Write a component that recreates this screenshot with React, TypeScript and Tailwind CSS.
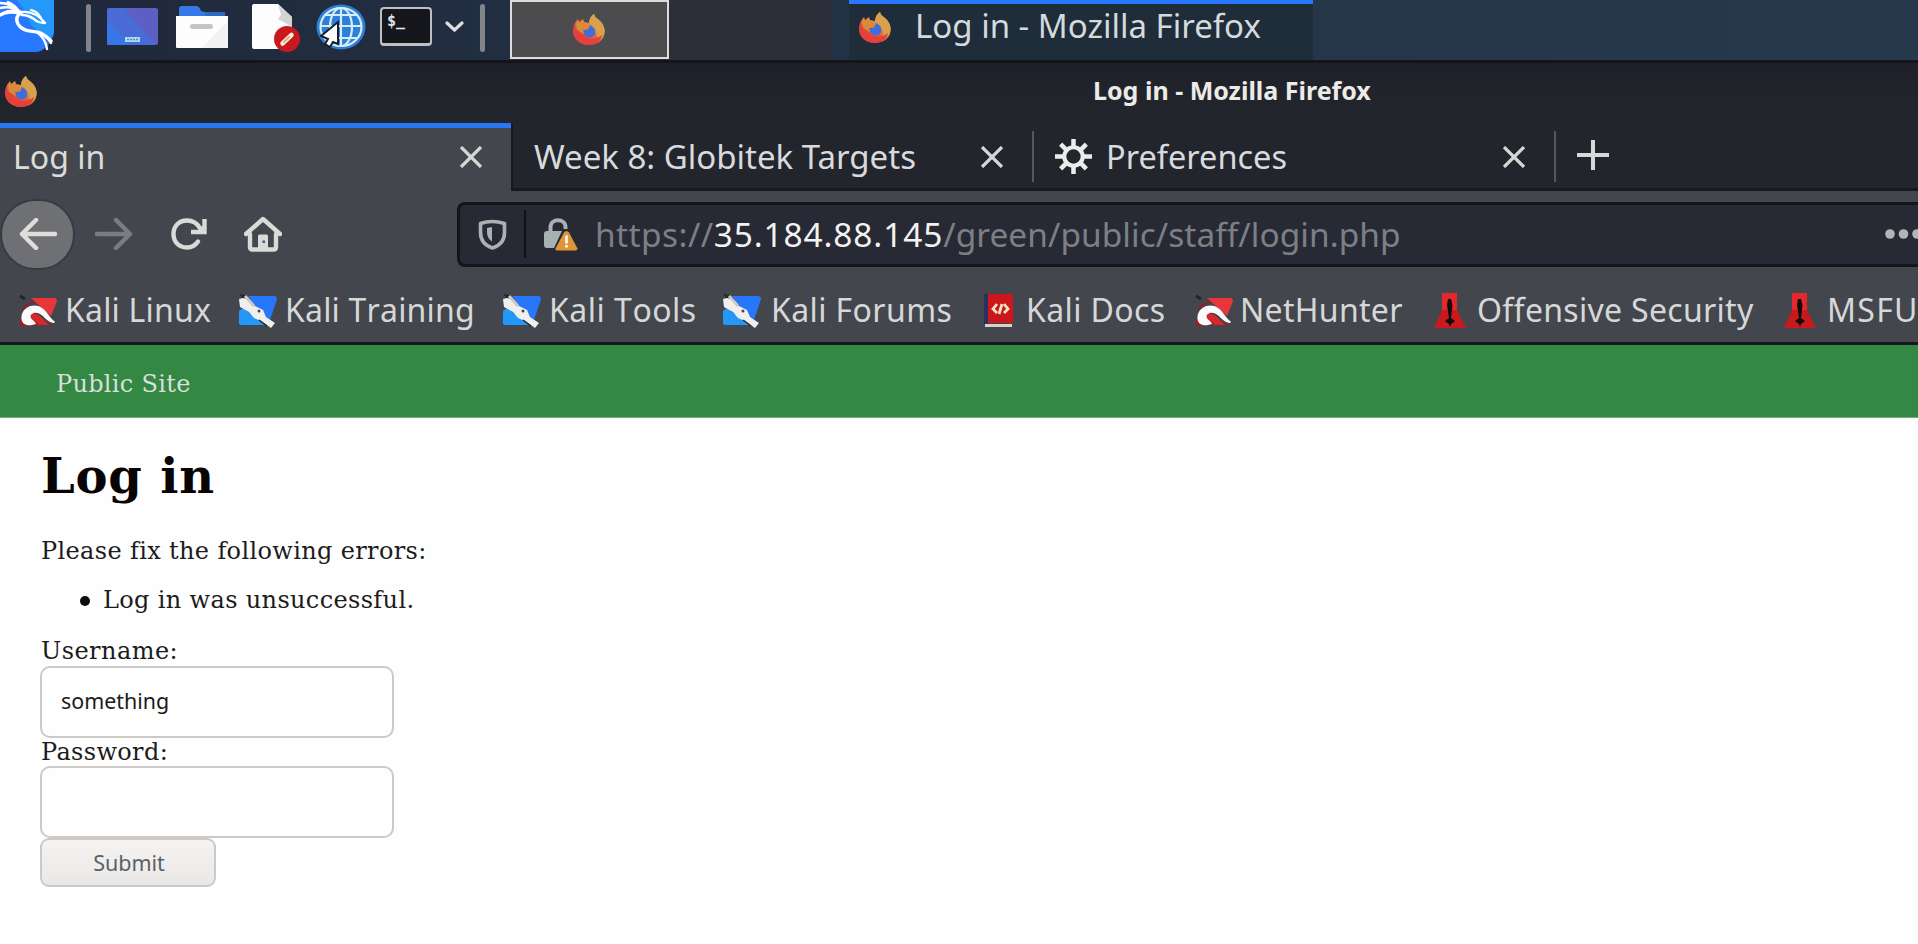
import type { ReactNode } from "react";

function Firefox({ w = 34, h = 31 }: { w?: number; h?: number }) {
  return (
    <svg width={w} height={h} viewBox="0 0 34 31" preserveAspectRatio="none" className="block shrink-0">
      <defs>
        <linearGradient id="foxBody" x1="0.9" y1="0.2" x2="0.3" y2="1">
          <stop offset="0" stopColor="#dca24c" />
          <stop offset="0.4" stopColor="#de8a42" />
          <stop offset="0.65" stopColor="#e4503f" />
          <stop offset="1" stopColor="#e02c39" />
        </linearGradient>
      </defs>
      <path d="M6 5l1 3 4-3 1 3 5 1c1-5 2-7 5-9 1 4 3 5 6 7 5 4 6 12 3 17-3 5-9 7-14 7C7 31 1 24 1 17c0-4 1-8 5-12z" fill="url(#foxBody)" />
      <path d="M22 0c1 4 4 4 7 8 4 5 5 11 1 16l-5 1c1-5 0-9-3-12-2-1-4-2-5-4 0-4 2-7 5-9z" fill="#d9a04d" />
      <path d="M1 15l5 1c2 6 6 9 12 9 6 0 9-2 12-4-1 6-7 10-13 10C8 31 1 25 1 17z" fill="#e2413c" />
      <path d="M6 6l1 3 4-3 1 3 5 2-4 5-1 4-7-4-1-6z" fill="#da8a38" />
      <path d="M11 16l5 0 2-5c4 2 6 5 5 9-2 5-10 4-11-1z" fill="#3b6fdd" />
    </svg>
  );
}

function KaliMenu() {
  return (
    <svg width="54" height="52" viewBox="0 0 54 52" className="block shrink-0">
      <path d="M0 0h54v32c0 7-9 20-18 20H0z" fill="#2777ff" />
      <path d="M17 0h37v31c-1 4-3 7-5 9L31 25l-6-14z" fill="#2599fb" />
      <g fill="none" stroke="#fff" strokeLinecap="round" strokeLinejoin="round">
        <path d="M0 15c7-4 14-3 21-2-5 3-5 7-3 11 4 7 12 7 19 8 6 1 10 5 14 9" strokeWidth="3.400" />
        <path d="M0 8c8-2 15 0 21 4M0 3c8 0 15 4 20 9M8 2c5 2 8 5 11 9M3 13c6-3 11-3 16-1" strokeWidth="2.400" />
        <path d="M22 12c9-1 16 2 23 11-4 0-8-1-11-4-3-2-7-4-12-4" strokeWidth="2.400" />
        <path d="M31 10c5 1 8 4 10 8" strokeWidth="2" />
        <path d="M38 33c5 4 8 9 9 16M42 34c5 3 7 5 9 9" strokeWidth="2.400" />
      </g>
    </svg>
  );
}

function Desktop() {
  return (
    <svg width="52" height="38" viewBox="0 0 52 38" className="block shrink-0">
      <rect width="51" height="37" rx="2.5" fill="#5e5fc5" />
      <path d="M2 0h15l32 37H2a2 2 0 0 1-2-2V2a2 2 0 0 1 2-2z" fill="#4a6ad6" />
      <path d="M0 13l24 24H2a2 2 0 0 1-2-2z" fill="#3676e6" />
      <rect x="18" y="29" width="15" height="5" fill="#a9dcec" />
      <path d="M20 31.5h11" stroke="#5390c5" strokeWidth="1.3" strokeDasharray="2 1" />
    </svg>
  );
}

function Folder() {
  return (
    <svg width="52" height="44" viewBox="0 0 52 44" className="block shrink-0">
      <path d="M26 7h23v8H26z" fill="#286bc4" />
      <path d="M3 12V4q0-3 3-3h14q3 0 4 3 1 3 5 3v6H3z" fill="#3578e8" />
      <path d="M0 11h52v31q0 1-1 1H1q-1 0-1-1z" fill="#fdfdfd" />
      <path d="M52 16v27H26z" fill="#f3f2f1" />
      <rect x="14" y="19" width="23" height="5" rx="2.5" fill="#c6c4c2" />
    </svg>
  );
}

function Editor() {
  return (
    <svg width="48" height="48" viewBox="0 0 48 48" className="block shrink-0">
      <path d="M0 2q0-2 2-2h24l14 13v32H2q-2 0-2-2z" fill="#fdfdfd" />
      <path d="M26 0l14 13v10L26 15l3-4z" fill="#d6d4d2" />
      <circle cx="35" cy="35" r="13" fill="#c9191e" />
      <path d="M30.500 39.500L39.500 31" stroke="#f8eee0" strokeWidth="4.500" strokeLinecap="round" />
      <path d="M32 38l5-5" stroke="#dfae7c" strokeWidth="2" strokeLinecap="round" />
    </svg>
  );
}

function Globe() {
  return (
    <svg width="50" height="46" viewBox="0 0 50 46" className="block shrink-0">
      <ellipse cx="25" cy="23" rx="24.5" ry="22.5" fill="#2d80d8" />
      <g fill="none" stroke="#d6ecf6" strokeWidth="2.2">
        <ellipse cx="25" cy="23" rx="20.5" ry="19" />
        <ellipse cx="25" cy="23" rx="11" ry="19" />
        <path d="M25 3v40M4 22h42M8 11h34M8 34h34" />
      </g>
      <path d="M22 18v22l-5-2-3 5-5-3 3-5-7-3z" fill="#fff" stroke="#17202c" strokeWidth="2" />
    </svg>
  );
}

function Terminal() {
  return (
    <div className="flex h-[39px] w-[52px] shrink-0 items-start rounded-[4px] border-2 border-b-[3px] border-[#c0c0c0] bg-[#15171c] pt-[3px] pl-[5px] font-['DejaVu_Sans_Mono',monospace] text-[15px] leading-[18px] font-bold text-[#e6e6e6]">
      $_
    </div>
  );
}

function Close() {
  return (
    <svg width="24" height="22" viewBox="0 0 24 22" className="block shrink-0">
      <path d="M2 1l20 20M22 1L2 21" stroke="#d6d6d4" strokeWidth="3.200" />
    </svg>
  );
}

function Gear() {
  return (
    <svg width="37" height="35" viewBox="-18 -17 36 34" className="block shrink-0">
      <g stroke="#ececea" strokeWidth="4.4">
        <path d="M0-17V-9M0 17V9M-18 0H-9M18 0H9M-12.5-12L-7-6.500M12.500-12L7-6.500M-12.500 12L-7 6.500M12.500 12L7 6.500" />
      </g>
      <circle r="9" fill="none" stroke="#ececea" strokeWidth="4" />
    </svg>
  );
}

function ArrowLeft({ color, flip = false }: { color: string; flip?: boolean }) {
  return (
    <svg width="38" height="32" viewBox="0 0 38 32" className={flip ? "block shrink-0 -scale-x-100" : "block shrink-0"}>
      <path d="M36 16H3M17 2L3 16l14 14" fill="none" stroke={color} strokeWidth="4.500" strokeLinecap="round" strokeLinejoin="round" />
    </svg>
  );
}

function Reload() {
  return (
    <svg width="37" height="32" viewBox="0 0 37 32" className="block shrink-0">
      <path d="M29 10C26 5 21 2.500 16 2.500 8 2.500 2.500 8 2.500 16S8 29.500 16 29.500c6 0 9-3 11-6" fill="none" stroke="#dadad8" strokeWidth="4.400" strokeLinecap="round" />
      <path d="M33.500 1v13H20" fill="none" stroke="#dadad8" strokeWidth="4.400" />
      <path d="M35 5v10H24z" fill="#dadad8" />
    </svg>
  );
}

function Home() {
  return (
    <svg width="38" height="36" viewBox="0 0 38 36" className="block shrink-0">
      <path d="M2 18L19 3l17 15M6 18v13q0 2.500 2.500 2.500h21q2.500 0 2.500-2.500V18" fill="none" stroke="#dadad8" strokeWidth="4.400" strokeLinecap="round" strokeLinejoin="round" />
      <path d="M14 34V20q0-1.500 1.500-1.500h7Q24 18.500 24 20v14z" fill="#dadad8" />
      <rect x="18.500" y="24.500" width="2.500" height="2.500" fill="#55585e" />
    </svg>
  );
}

function Shield() {
  return (
    <svg width="29" height="31" viewBox="0 0 29 31" className="block shrink-0">
      <path d="M2.500 4.500Q14 .5 26.500 4.500v9c0 8-4 13-12 15.500-8-2.500-12-7.500-12-15.500z" fill="none" stroke="#a9b1b3" strokeWidth="3.600" strokeLinejoin="round" />
      <path d="M14 8v14.500C10.500 20.500 9 17 9 13V9z" fill="#a9b1b3" />
    </svg>
  );
}

function Lock() {
  return (
    <svg width="34" height="33" viewBox="0 0 34 33" className="block shrink-0">
      <path d="M6.500 15V9c0-9 15-9 15 0v2" fill="none" stroke="#a7b0b2" strokeWidth="4" />
      <path d="M0 16q0-3 3-3h15l-8 17H3q-3 0-3-3z" fill="#a7b0b2" />
      <path d="M20 14.500q2.500-3 5 0l8.500 16q0 2-2 2H14q-3 0-2.500-2z" fill="#e09638" />
      <path d="M22.500 17.500v8M22.500 27v2.500" stroke="#fff" strokeWidth="2.600" />
    </svg>
  );
}

function RedDragon() {
  return (
    <svg width="38" height="32" viewBox="0 0 38 32" className="block shrink-0">
      <path d="M12 3h23q3 0 3 3l-6 15-10-9z" fill="#e8363a" />
      <path d="M1 31v-6l8-5 24 9v1H20z" fill="#a81b1f" />
      <path d="M1 1l5 3" stroke="#23252b" strokeWidth="3" />
      <path d="M10 20q6-4 12 2l8 8H20z" fill="#d8262a" />
      <path d="M13 30C4 32 1 25 3 19c3-8 13-11 20-6 5 3 7 9 13 14l-1 1c-7-1-10-7-14-9-5-3-11 0-9 4 1 2 4 3 5 6z" fill="#fbfbfb" />
      <path d="M3 14q5-6 12-6" stroke="#8c2225" strokeWidth="2" fill="none" />
    </svg>
  );
}

function BlueKnife() {
  return (
    <svg width="38" height="34" viewBox="0 0 38 34" className="block shrink-0">
      <path d="M9 2h26q3 0 3 3l-7 21-9-6z" fill="#2777fb" />
      <path d="M0 30V17l4-3 23 17H2z" fill="#2498f8" />
      <path d="M0 0l6 1 10 10-6 1z" fill="#24262c" />
      <path d="M0 5l4-1 4 1 8 7 8 4 3 7 9 6-4 5-10-7-7-3-5-6-9-5z" fill="#f0efee" />
      <path d="M6 2l9 10" stroke="#cfccc7" strokeWidth="3" />
      <circle cx="20" cy="17" r="1.500" fill="#44464e" />
      <path d="M20 26l8 6" stroke="#26282d" strokeWidth="1.500" />
    </svg>
  );
}

function Book() {
  return (
    <svg width="29" height="35" viewBox="0 0 29 35" className="block shrink-0">
      <path d="M1 1h26q2 0 2 2v27H1z" fill="#cb171b" />
      <path d="M0 1h4v30H0z" fill="#27305e" />
      <path d="M1 31h27v3H1z" fill="#d8d2c8" />
      <path d="M13 11l-4 5 4 4M20 11l4 5-4 4M18 11l-3 10" fill="none" stroke="#f3e3c0" strokeWidth="2.800" />
    </svg>
  );
}

function Flask() {
  return (
    <svg width="32" height="35" viewBox="0 0 32 35" className="block shrink-0">
      <path d="M8 0h15v17l9 18H0l8-18z" fill="#c8191d" />
      <path d="M8 0h15v17H8z" fill="#e3272b" />
      <path d="M14 6h3l1.500 6-1.500 13 4 3-4 3-1 3-1-3-4-3 4-3-2-13z" fill="#0f0d0d" />
    </svg>
  );
}

function Bookmark({ icon, className, children }: { icon: ReactNode; className: string; children: string }) {
  return (
    <div className={`flex shrink-0 items-center ${className}`}>
      {icon}
      <span className="mb-px whitespace-pre">{children}</span>
    </div>
  );
}

function TaskBar() {
  return (
    <header className="flex h-[60px] shrink-0 bg-linear-to-r from-[#20283a] via-[#233447] to-[#26394a]">
      <div className="flex w-[510px] shrink-0 items-start">
        <KaliMenu />
        <div className="mt-1 ml-8 h-12 w-[5px] rounded-sm bg-[#828489]" />
        <div className="mt-2 ml-4"><Desktop /></div>
        <div className="mt-[5px] ml-[17px]"><Folder /></div>
        <div className="mt-1 ml-6"><Editor /></div>
        <div className="mt-1 ml-4"><Globe /></div>
        <div className="mt-[7px] ml-[14px]"><Terminal /></div>
        <svg width="19" height="12" viewBox="0 0 19 12" className="mt-[21px] ml-[13px] shrink-0">
          <path d="M2 2l7.500 7L17 2" fill="none" stroke="#dedede" strokeWidth="3.200" strokeLinecap="round" />
        </svg>
        <div className="mt-1 ml-4 h-12 w-[5px] rounded-sm bg-[#828489]" />
      </div>
      <div className="flex h-[59px] w-[159px] shrink-0 justify-center border-2 border-[#dddcd8] bg-[#4c4b4d] pt-3 pr-px">
        <Firefox />
      </div>
      <div className="w-[162px] shrink-0 bg-[#2d2e3a]" />
      <div className="ml-[18px] flex h-[60px] w-[464px] shrink-0 items-start border-t-4 border-[#2777ff] bg-[#1f2c39] pl-[9px] text-[33px] leading-[44px] text-[#d5dadd]">
        <div className="mt-2"><Firefox /></div>
        <span className="ml-[23px] whitespace-pre">Log in - Mozilla Firefox</span>
      </div>
    </header>
  );
}

function TabStrip() {
  return (
    <div className="flex h-[69px] shrink-0 bg-[#44464e] text-[33px] leading-[54px] text-[#dbdcda]">
      <div className="flex w-[511px] shrink-0 items-center border-t-[5px] border-[#2777f6] pr-[28px] pb-[6px] pl-[13px] text-[32px]">
        <span className="grow">Log in</span>
        <Close />
      </div>
      <div className="mb-px flex grow items-center border-b-[3px] border-l-2 border-[#181920] bg-[#23252d] pt-[2px] text-[#d8dadd]">
        <div className="flex w-[519px] shrink-0 items-center pr-[28px] pl-[21px]">
          <span className="grow whitespace-pre">Week 8: Globitek Targets</span>
          <Close />
        </div>
        <div className="h-[51px] w-[2px] shrink-0 bg-[#55575e]" />
        <div className="flex w-[520px] shrink-0 items-center pr-[28px] pl-[21px]">
          <Gear />
          <span className="ml-[14px] grow text-[32.5px]">Preferences</span>
          <Close />
        </div>
        <div className="h-[51px] w-[2px] shrink-0 bg-[#55575e]" />
        <svg width="32" height="32" viewBox="0 0 32 32" className="mb-[3px] ml-[21px] shrink-0">
          <path d="M16 1v30M0 16h32" stroke="#d8d8d6" strokeWidth="4" />
        </svg>
      </div>
    </div>
  );
}

function NavBar() {
  return (
    <div className="flex h-[84px] shrink-0 items-center bg-[#44464e]">
      <div className="flex h-[71px] w-[75px] shrink-0 items-center justify-center rounded-full border-2 border-[#383a42] bg-[#6e7074]">
        <ArrowLeft color="#e0dedb" />
      </div>
      <div className="ml-5"><ArrowLeft color="#7a7c81" flip /></div>
      <div className="ml-[38px]"><Reload /></div>
      <div className="ml-9"><Home /></div>
      <div className="ml-[175px] flex h-[65px] grow items-center overflow-hidden rounded-l-[8px] border-[3px] border-r-0 border-[#14151a] bg-[#272935] pl-[18px]">
        <Shield />
        <div className="ml-[17px] h-[48px] w-[2px] shrink-0 bg-[#101116]" />
        <div className="mr-[17px] ml-[18px]"><Lock /></div>
        <span className="grow text-[33.4px] leading-[50px] whitespace-pre text-[#7c8085]">
          <span className="tracking-[0.45px]">https://</span>
          <span className="tracking-[0.9px] text-[#f2f2f0]">35.184.88.145</span>
          <span className="tracking-[0.06px]">/green/public/staff/login.php</span>
        </span>
        <svg width="33" height="12" viewBox="0 0 33 12" className="shrink-0" fill="#b0b5b6">
          <circle cx="5" cy="6" r="4.800" />
          <circle cx="18.500" cy="6" r="4.800" />
          <circle cx="32" cy="6" r="4.800" />
        </svg>
      </div>
    </div>
  );
}

function BookmarkBar() {
  return (
    <div className="flex h-[69px] shrink-0 items-center overflow-hidden border-b-[3px] border-[#17181c] bg-[#44464e] pt-[3px] pl-[19px] text-[32px] leading-[44px] tracking-[0.3px] text-[#d6d8d8] [font-kerning:none]">
      <Bookmark icon={<RedDragon />} className="w-[220px] gap-[8px] tracking-[0.2px]">Kali Linux</Bookmark>
      <Bookmark icon={<BlueKnife />} className="w-[264px] gap-[8px] tracking-[0.2px]">Kali Training</Bookmark>
      <Bookmark icon={<BlueKnife />} className="w-[220px] gap-[8px] tracking-[0.5px]">Kali Tools</Bookmark>
      <Bookmark icon={<BlueKnife />} className="w-[261px] gap-[10px] tracking-[0.4px]">Kali Forums</Bookmark>
      <Bookmark icon={<Book />} className="w-[211px] gap-[13px] tracking-[0.4px]">Kali Docs</Bookmark>
      <Bookmark icon={<RedDragon />} className="w-[239px] gap-[7px]">NetHunter</Bookmark>
      <Bookmark icon={<Flask />} className="w-[350px] gap-[11px]">Offensive Security</Bookmark>
      <Bookmark icon={<Flask />} className="gap-[11px] tracking-[1.3px]">MSFU</Bookmark>
    </div>
  );
}

export default function App() {
  return (
    <div className="flex h-[944px] w-full flex-col overflow-hidden bg-[#fefefe] font-['Noto_Sans',sans-serif]">
      <TaskBar />
      <div className="flex h-[63px] shrink-0 items-start border-t-[3px] border-[#14151a] bg-linear-to-b from-[#1e1f28] via-[#22242c] to-[#23252d]">
        <div className="mt-[13px] ml-1"><Firefox /></div>
        <div className="mt-[8px] ml-[1055px] text-[25px] leading-[39px] font-bold whitespace-pre text-[#ecebe8]">
          Log in - Mozilla Firefox
        </div>
      </div>
      <TabStrip />
      <NavBar />
      <BookmarkBar />
      <div className="flex h-[73px] shrink-0 items-center border-b border-[#70ab7a] bg-[#338844] pt-[5px] pl-[56px] font-['DejaVu_Serif',serif] text-[24px] tracking-[0.3px] text-[#d9dfda]">
        <span>Public Site</span>
      </div>
      <main className="flex flex-col items-start pl-10 font-['DejaVu_Serif',serif] text-[24px] leading-[30px] tracking-[0.2px] text-[#1b1b20]">
        <h1 className="mt-[28px] pl-px text-[48px] leading-[60px] font-bold tracking-[0.8px] text-[#080404]">Log in</h1>
        <p className="mt-[30px] pl-px tracking-[0.35px]">Please fix the following errors:</p>
        <ul className="mt-[19px] flex items-center tracking-[0.35px]">
          <li className="flex items-center">
            <span className="mt-[2px] mr-[13px] ml-10 size-[10px] rounded-full bg-[#0c0c0f]" />
            Log in was unsuccessful.
          </li>
        </ul>
        <form className="mt-[21px] flex flex-col items-start">
          <label className="h-[30px] pl-px tracking-[0.45px]">Username:</label>
          <div className="flex h-[72px] w-[354px] items-center rounded-[10px] border-2 border-[#cdc9c5] bg-[#fefefe] pb-[3px] pl-[19px] font-['Noto_Sans',sans-serif] text-[21.4px] tracking-normal">
            something
          </div>
          <label className="h-[28px] pl-px leading-[28px] tracking-[0.35px]">Password:</label>
          <div className="h-[72px] w-[354px] rounded-[10px] border-2 border-[#cdc9c5] bg-[#fefefe]" />
          <button type="button" className="flex h-[49px] w-[176px] items-center justify-center rounded-[9px] border-2 border-[#cdc9c5] bg-linear-to-b from-[#f5f4f3] to-[#e9e8e6] pl-[2px] font-['Noto_Sans',sans-serif] text-[21.5px] tracking-normal text-[#5b6165]">
            Submit
          </button>
        </form>
      </main>
    </div>
  );
}
